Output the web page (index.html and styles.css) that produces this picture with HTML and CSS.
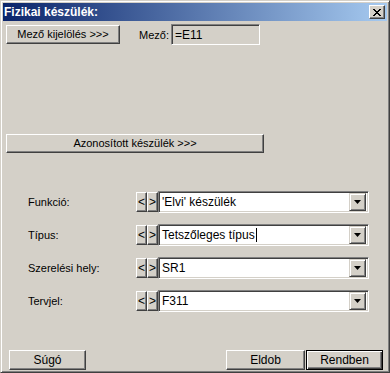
FILE: index.html
```html
<!DOCTYPE html>
<html lang="hu">
<head>
<meta charset="utf-8">
<title>Fizikai készülék</title>
<link rel="stylesheet" href="styles.css">
</head>
<body>
<div class="window">
  <div class="titlebar">
    <span class="title">Fizikai készülék:</span>
    <button class="close" aria-label="Bezárás">
      <svg width="8" height="7" viewBox="0 0 8 7"><path d="M0 0h2v1h1v1h2v-1h1v-1h2v1h-1v1h-1v1h-1v1h1v1h1v1h1v1h-2v-1h-1v-1h-2v1h-1v1h-2v-1h1v-1h1v-1h1v-1h-1v-1h-1v-1h-1z" fill="#000"/></svg>
    </button>
  </div>
  <div class="client">
    <div class="top-row">
      <button class="btn btn-select">Mező kijelölés &gt;&gt;&gt;</button>
      <span class="field-label">Mező:</span>
      <div class="field-ro">=E11</div>
    </div>
    <button class="btn btn-wide">Azonosított készülék &gt;&gt;&gt;</button>
    <div class="rows">
      <div class="row">
        <span class="row-label">Funkció:</span>
        <button class="btn spin">&lt;</button><button class="btn spin">&gt;</button>
        <div class="combo"><span class="combo-text">'Elvi' készülék</span><span class="drop"><svg width="7" height="4" viewBox="0 0 7 4"><path d="M0 0h7l-3.5 4z" fill="#000"/></svg></span></div>
      </div>
      <div class="row">
        <span class="row-label">Típus:</span>
        <button class="btn spin">&lt;</button><button class="btn spin">&gt;</button>
        <div class="combo"><span class="combo-text">Tetszőleges típus<span class="caret"></span></span><span class="drop"><svg width="7" height="4" viewBox="0 0 7 4"><path d="M0 0h7l-3.5 4z" fill="#000"/></svg></span></div>
      </div>
      <div class="row">
        <span class="row-label">Szerelési hely:</span>
        <button class="btn spin">&lt;</button><button class="btn spin">&gt;</button>
        <div class="combo"><span class="combo-text">SR1</span><span class="drop"><svg width="7" height="4" viewBox="0 0 7 4"><path d="M0 0h7l-3.5 4z" fill="#000"/></svg></span></div>
      </div>
      <div class="row">
        <span class="row-label">Tervjel:</span>
        <button class="btn spin">&lt;</button><button class="btn spin">&gt;</button>
        <div class="combo"><span class="combo-text">F311</span><span class="drop"><svg width="7" height="4" viewBox="0 0 7 4"><path d="M0 0h7l-3.5 4z" fill="#000"/></svg></span></div>
      </div>
    </div>
    <div class="footer">
      <button class="btn btn-foot">Súgó</button>
      <span class="spacer"></span>
      <button class="btn btn-foot btn-eldob">Eldob</button>
      <button class="btn btn-foot btn-default">Rendben</button>
    </div>
  </div>
</div>
</body>
</html>
```
FILE: styles.css
```css
* { box-sizing: border-box; }
html, body { margin: 0; padding: 0; background: #d4d0c8; }
body { font-family: "Liberation Sans", Arial, sans-serif; font-size: 11px; color: #000; }

.window {
  width: 390px;
  height: 373px;
  border: 1px solid;
  border-color: #d4d0c8 #404040 #404040 #d4d0c8;
  box-shadow: inset 1px 1px #fff, inset -1px -1px #808080;
  padding: 2px;
  background: #d4d0c8;
  display: flex;
  flex-direction: column;
}

.titlebar {
  height: 18px;
  flex: none;
  display: flex;
  align-items: center;
  padding-left: 1px;
  background: linear-gradient(to right, #0a246a, #a6caf0);
}
.title {
  color: #fff;
  font-weight: bold;
  font-size: 12px;
  flex: 1;
}
.close {
  width: 16px;
  height: 14px;
  margin-right: 2px;
  padding: 0;
  border: 1px solid;
  border-color: #fff #404040 #404040 #fff;
  box-shadow: inset -1px -1px #808080;
  background: #d4d0c8;
  display: flex;
  align-items: center;
  justify-content: center;
}
.close svg { display: block; margin-left: 0px; }

.client {
  flex: 1;
  display: flex;
  flex-direction: column;
  align-items: flex-start;
  padding: 0 4px 0 3px;
}

.btn {
  font-family: inherit;
  font-size: 11px;
  color: #000;
  background: #d4d0c8;
  border: 1px solid;
  border-color: #fff #404040 #404040 #fff;
  box-shadow: inset -1px -1px #808080;
  padding: 0;
  margin: 0;
  display: flex;
  align-items: center;
  justify-content: center;
  line-height: 1;
}

.top-row {
  margin-top: 3px;
  height: 21px;
  display: flex;
  align-items: center;
}
.btn-select { width: 114px; height: 19px; }
.field-label { margin-left: 19px; width: 32px; }
.field-ro {
  width: 89px;
  height: 21px;
  border: 1px solid;
  border-color: #808080 #fff #fff #808080;
  box-shadow: inset 1px 1px #404040, inset -1px -1px #d4d0c8;
  padding: 0 3px;
  display: flex;
  align-items: center;
  font-size: 12px;
}

.btn-wide {
  margin-top: 89px;
  width: 258px;
  height: 19px;
}

.rows {
  margin-top: 38px;
  display: flex;
  flex-direction: column;
  gap: 11px;
  align-self: stretch;
}
.row {
  height: 22px;
  display: flex;
  align-items: center;
}
.row-label { width: 130px; padding-left: 22px; }
.spin { width: 11px; height: 20px; font-size: 12px; }

.combo {
  width: 211px;
  height: 22px;
  border: 1px solid;
  border-color: #808080 #fff #fff #808080;
  box-shadow: inset 1px 1px #404040, inset -1px -1px #d4d0c8;
  background: #fff;
  padding: 2px;
  display: flex;
  align-items: center;
  font-size: 12px;
}
.combo-text { flex: 1; padding-left: 1px; display: flex; align-items: center; }
.caret { width: 1px; height: 14px; background: #000; margin-left: 1px; }
.drop {
  width: 17px;
  height: 18px;
  border: 1px solid;
  border-color: #d4d0c8 #404040 #404040 #d4d0c8;
  box-shadow: inset 1px 1px #fff, inset -1px -1px #808080;
  background: #d4d0c8;
  display: flex;
  align-items: center;
  justify-content: center;
}
.drop svg { display: block; }

.footer {
  margin-top: auto;
  align-self: stretch;
  display: flex;
  align-items: flex-end;
  padding-left: 3px;
  gap: 1px;
}
.spacer { flex: 1; }
.btn-foot { width: 77px; height: 20px; font-size: 12px; }
.btn-eldob { width: 79px; }
.btn-default {
  border: 1px solid #000;
  box-shadow: inset 1px 1px #fff, inset -1px -1px #404040, inset -2px -2px #808080;
}
```
